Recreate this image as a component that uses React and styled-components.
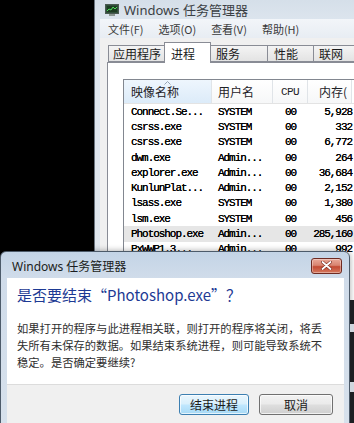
import React from 'react';
import styled, { createGlobalStyle } from 'styled-components';

const SANS = `"Noto Sans", "Noto Sans CJK SC", sans-serif`;
const CJK = `"Noto Sans CJK SC", "Noto Sans", sans-serif`;
const MONO = `"Liberation Mono", "Noto Sans CJK SC", monospace`;

const Global = createGlobalStyle`
  html, body { margin: 0; padding: 0; background: #000; }
  body { width: 354px; height: 423px; overflow: hidden; }
  * { box-sizing: border-box; }
`;

const Screen = styled.div`
  position: relative;
  width: 354px;
  height: 423px;
  overflow: hidden;
  background: #000;
`;

const TaskWindow = styled.div`
  margin-left: 94px;
  width: 300px;
  height: 423px;
  border-left: 1px solid #6b7580;
  background: linear-gradient(180deg, #d5dfe9 0px, #dde5ee 22px, #e2e8ef 100%);
  display: flex;
  flex-direction: column;
`;

const TitleBar = styled.div`
  height: 22px;
  display: flex;
  align-items: center;
  gap: 5px;
  padding-left: 10px;
  font-family: ${SANS};
  font-size: 13px;
  color: #3b3f44;
  white-space: nowrap;
`;

const Client = styled.div`
  margin-left: 5px;
  flex: 1;
  display: flex;
  flex-direction: column;
  background: #f0f0f0;
`;

const MenuBar = styled.div`
  height: 19px;
  display: flex;
  align-items: center;
  gap: 15px;
  padding-left: 8px;
  background: linear-gradient(180deg, #f2f5f9, #e8edf3);
  font-family: ${CJK};
  font-size: 11px;
  color: #3a3a3a;
  white-space: nowrap;
`;

const TabsRow = styled.div`
  margin-top: 4px;
  height: 20px;
  display: flex;
  align-items: flex-end;
  padding-left: 8px;
  position: relative;
  z-index: 1;
`;

const Tab = styled.div`
  flex: none;
  width: ${p => p.$w}px;
  height: ${p => (p.$active ? 21 : 17)}px;
  margin: ${p => (p.$active ? '0 -1px -1px -1px' : '0')};
  padding-left: ${p => p.$pad}px;
  border: 1px solid #898c95;
  border-bottom: ${p => (p.$active ? 'none' : '1px solid #898c95')};
  border-left-width: ${p => (p.$first || p.$active ? 1 : 0)}px;
  background: ${p => (p.$active ? '#fff' : 'linear-gradient(180deg, #f4f4f4, #e3e3e3)')};
  font-family: ${CJK};
  font-size: 12px;
  color: #1b1b1b;
  display: flex;
  align-items: center;
  white-space: nowrap;
  z-index: ${p => (p.$active ? 2 : 0)};
`;

const Panel = styled.div`
  margin-left: 7px;
  flex: 1;
  background: #fff;
  border: 1px solid #898c95;
  border-right: none;
  padding: 16px 0 0 15px;
`;

const Table = styled.div`
  border: 1px solid #828790;
  border-right: none;
  width: 260px;
  height: 400px;
  background: #fff;
`;

const HeaderRow = styled.div`
  height: 24px;
  display: flex;
  border-bottom: 1px solid #e3e3e3;
`;

const HeadCell = styled.div`
  position: relative;
  flex: none;
  width: ${p => p.$w}px;
  height: 100%;
  display: flex;
  align-items: center;
  justify-content: ${p => (p.$center ? 'center' : 'flex-start')};
  padding-left: ${p => p.$pl || 0}px;
  border-right: 1px solid #e0e4e8;
  background: ${p => (p.$sorted ? 'linear-gradient(180deg, #eef6fd, #dcebf9)' : 'linear-gradient(180deg, #ffffff, #f6f7f8)')};
  font-family: ${p => (p.$mono ? MONO : CJK)};
  font-size: ${p => (p.$mono ? '11px' : '12px')};
  letter-spacing: ${p => (p.$mono ? '-0.6px' : '0')};
  color: #1e2227;
  white-space: nowrap;
  overflow: hidden;
`;

const SortArrow = styled.svg`
  position: absolute;
  top: 1px;
  left: 40px;
`;

const Row = styled.div`
  height: 15.3px;
  display: flex;
  align-items: center;
  background: ${p => (p.$selected ? '#e6e6e6' : 'transparent')};
  font-family: ${MONO};
  font-size: 11px;
  letter-spacing: -1.05px;
  color: #000;
  text-shadow: 0 0 0.4px #000;
  white-space: nowrap;
`;

const Cell = styled.div`
  flex: none;
  width: ${p => p.$w}px;
  padding-left: ${p => p.$pl || 0}px;
  padding-right: ${p => p.$pr || 0}px;
  text-align: ${p => p.$align || 'left'};
  overflow: hidden;
`;

const Dialog = styled.div`
  position: absolute;
  left: 0;
  top: 251px;
  width: 350px;
  height: 180px;
  border: 1px solid #4d5b6a;
  border-radius: 6px 6px 0 0;
  background: linear-gradient(180deg, #c3d4e6 0px, #d0dcea 26px, #d7e1ec 100%);
  display: flex;
  flex-direction: column;
  box-shadow: 0 0 6px rgba(0, 0, 0, 0.35);
`;

const DialogTitle = styled.div`
  height: 26px;
  display: flex;
  align-items: center;
  justify-content: space-between;
  padding: 1px 7px 0 11px;
  font-family: ${SANS};
  font-size: 12px;
  color: #1b1d20;
  white-space: nowrap;
`;

const CloseButton = styled.div`
  width: 31px;
  height: 16px;
  border: 1px solid #6e2b22;
  border-radius: 3px;
  background: linear-gradient(180deg, #eaa898 0%, #d88470 45%, #c34a33 55%, #d67a5f 100%);
  display: flex;
  align-items: center;
  justify-content: center;
  box-shadow: inset 0 0 0 1px rgba(255, 255, 255, 0.35);
`;

const DialogBody = styled.div`
  margin: 0 5px 0 6px;
  background: #fff;
  padding: 7px 12px 13px 10px;
`;

const Heading = styled.div`
  font-family: ${CJK};
  font-size: 15px;
  line-height: 20px;
  color: #1d3a94;
  white-space: nowrap;
`;

const Message = styled.div`
  margin-top: 15px;
  font-family: ${CJK};
  font-size: 11.3px;
  line-height: 17px;
  color: #2e2e2e;
  white-space: nowrap;
`;

const Footer = styled.div`
  margin: 0 5px 0 6px;
  flex: 1;
  background: #f0f0f0;
  border-top: 1px solid #dcdcdc;
  display: flex;
  justify-content: flex-end;
  align-items: flex-start;
  gap: 10px;
  padding: 9px 11px 0 0;
`;

const Button = styled.div`
  width: ${p => p.$w}px;
  height: 21px;
  border: 1px solid ${p => (p.$primary ? '#3c7fb1' : '#707070')};
  border-radius: 3px;
  background: ${p =>
    p.$primary
      ? 'linear-gradient(180deg, #eaf6fd 0%, #d9f0fc 45%, #bee6fd 55%, #a7d9f5 100%)'
      : 'linear-gradient(180deg, #f2f2f2 0%, #ebebeb 45%, #dddddd 55%, #cfcfcf 100%)'};
  box-shadow: inset 0 0 0 1px rgba(255, 255, 255, 0.7);
  display: flex;
  align-items: center;
  justify-content: center;
  font-family: ${CJK};
  font-size: 12px;
  color: #1b1b1b;
`;

const EdgeShade = styled.div`
  position: absolute;
  right: 0;
  top: 300px;
  width: 4px;
  height: 123px;
  background: #1c1f22;
  display: flex;
  flex-direction: column;
  gap: 50px;
  padding-top: 24px;
`;

const EdgeMark = styled.div`
  width: 4px;
  height: ${p => p.$h}px;
  background: #cfd6dd;
`;

const AppIcon = () => (
  <svg width="14" height="12" viewBox="0 0 14 12">
    <rect x="0.5" y="0.5" width="13" height="9" fill="#2f4f3a" stroke="#4a5a52" />
    <rect x="2" y="2" width="10" height="6" fill="#1d3b22" />
    <polyline points="2,7 4,5 6,6 8,3 10,5 12,3" fill="none" stroke="#4fe05a" strokeWidth="1" />
    <rect x="4" y="10" width="6" height="2" fill="#8a9690" />
  </svg>
);

const CloseX = () => (
  <svg width="11" height="9" viewBox="0 0 11 9">
    <path d="M1.5 1 L9.5 8 M9.5 1 L1.5 8" stroke="#7a2a1f" strokeWidth="3" strokeLinecap="round" />
    <path d="M1.5 1 L9.5 8 M9.5 1 L1.5 8" stroke="#ffffff" strokeWidth="1.8" strokeLinecap="round" />
  </svg>
);

const rows = [
  ['Connect.Se...', 'SYSTEM', '00', '5,928'],
  ['csrss.exe', 'SYSTEM', '00', '332'],
  ['csrss.exe', 'SYSTEM', '00', '6,772'],
  ['dwm.exe', 'Admin...', '00', '264'],
  ['explorer.exe', 'Admin...', '00', '36,684'],
  ['KunlunPlat...', 'Admin...', '00', '2,152'],
  ['lsass.exe', 'SYSTEM', '00', '1,380'],
  ['lsm.exe', 'SYSTEM', '00', '456'],
  ['Photoshop.exe', 'Admin...', '00', '285,160'],
  ['PxWWP1.3...', 'Admin...', '00', '992'],
];

const tabs = [
  { label: '应用程序', w: 57, pad: 4 },
  { label: '进程', w: 47, pad: 6, active: true },
  { label: '服务', w: 58, pad: 6 },
  { label: '性能', w: 46, pad: 6 },
  { label: '联网', w: 60, pad: 5 },
];

export default function App() {
  return (
    <>
      <Global />
      <Screen>
        <TaskWindow>
          <TitleBar>
            <AppIcon />
            <span>Windows 任务管理器</span>
          </TitleBar>
          <Client>
            <MenuBar>
              <span>文件(F)</span>
              <span>选项(O)</span>
              <span>查看(V)</span>
              <span>帮助(H)</span>
            </MenuBar>
            <TabsRow>
              {tabs.map((t, i) => (
                <Tab key={t.label} $w={t.w} $pad={t.pad} $active={t.active} $first={i === 0}>
                  {t.label}
                </Tab>
              ))}
            </TabsRow>
            <Panel>
              <Table>
                <HeaderRow>
                  <HeadCell $w={88} $pl={7} $sorted>
                    映像名称
                    <SortArrow width="7" height="4" viewBox="0 0 7 4">
                      <polyline points="0.5,3.5 3.5,0.5 6.5,3.5" fill="none" stroke="#97a5b5" strokeWidth="1" />
                    </SortArrow>
                  </HeadCell>
                  <HeadCell $w={61} $pl={6}>用户名</HeadCell>
                  <HeadCell $w={35} $center $mono>CPU</HeadCell>
                  <HeadCell $w={44} $pl={11}>内存(</HeadCell>
                </HeaderRow>
                {rows.map((r, i) => (
                  <Row key={i} $selected={r[0] === 'Photoshop.exe'}>
                    <Cell $w={88} $pl={7}>{r[0]}</Cell>
                    <Cell $w={61} $pl={6}>{r[1]}</Cell>
                    <Cell $w={35} $align="center">{r[2]}</Cell>
                    <Cell $w={50} $pr={6} $align="right">{r[3]}</Cell>
                  </Row>
                ))}
              </Table>
            </Panel>
          </Client>
        </TaskWindow>

        <Dialog>
          <DialogTitle>
            <span>Windows 任务管理器</span>
            <CloseButton>
              <CloseX />
            </CloseButton>
          </DialogTitle>
          <DialogBody>
            <Heading>是否要结束“Photoshop.exe”？</Heading>
            <Message>
              如果打开的程序与此进程相关联，则打开的程序将关闭，将丢
              <br />
              失所有未保存的数据。如果结束系统进程，则可能导致系统不
              <br />
              稳定。是否确定要继续?
            </Message>
          </DialogBody>
          <Footer>
            <Button $w={70} $primary>结束进程</Button>
            <Button $w={74}>取消</Button>
          </Footer>
        </Dialog>

        <EdgeShade>
          <EdgeMark $h={8} />
          <EdgeMark $h={10} />
        </EdgeShade>
      </Screen>
    </>
  );
}
